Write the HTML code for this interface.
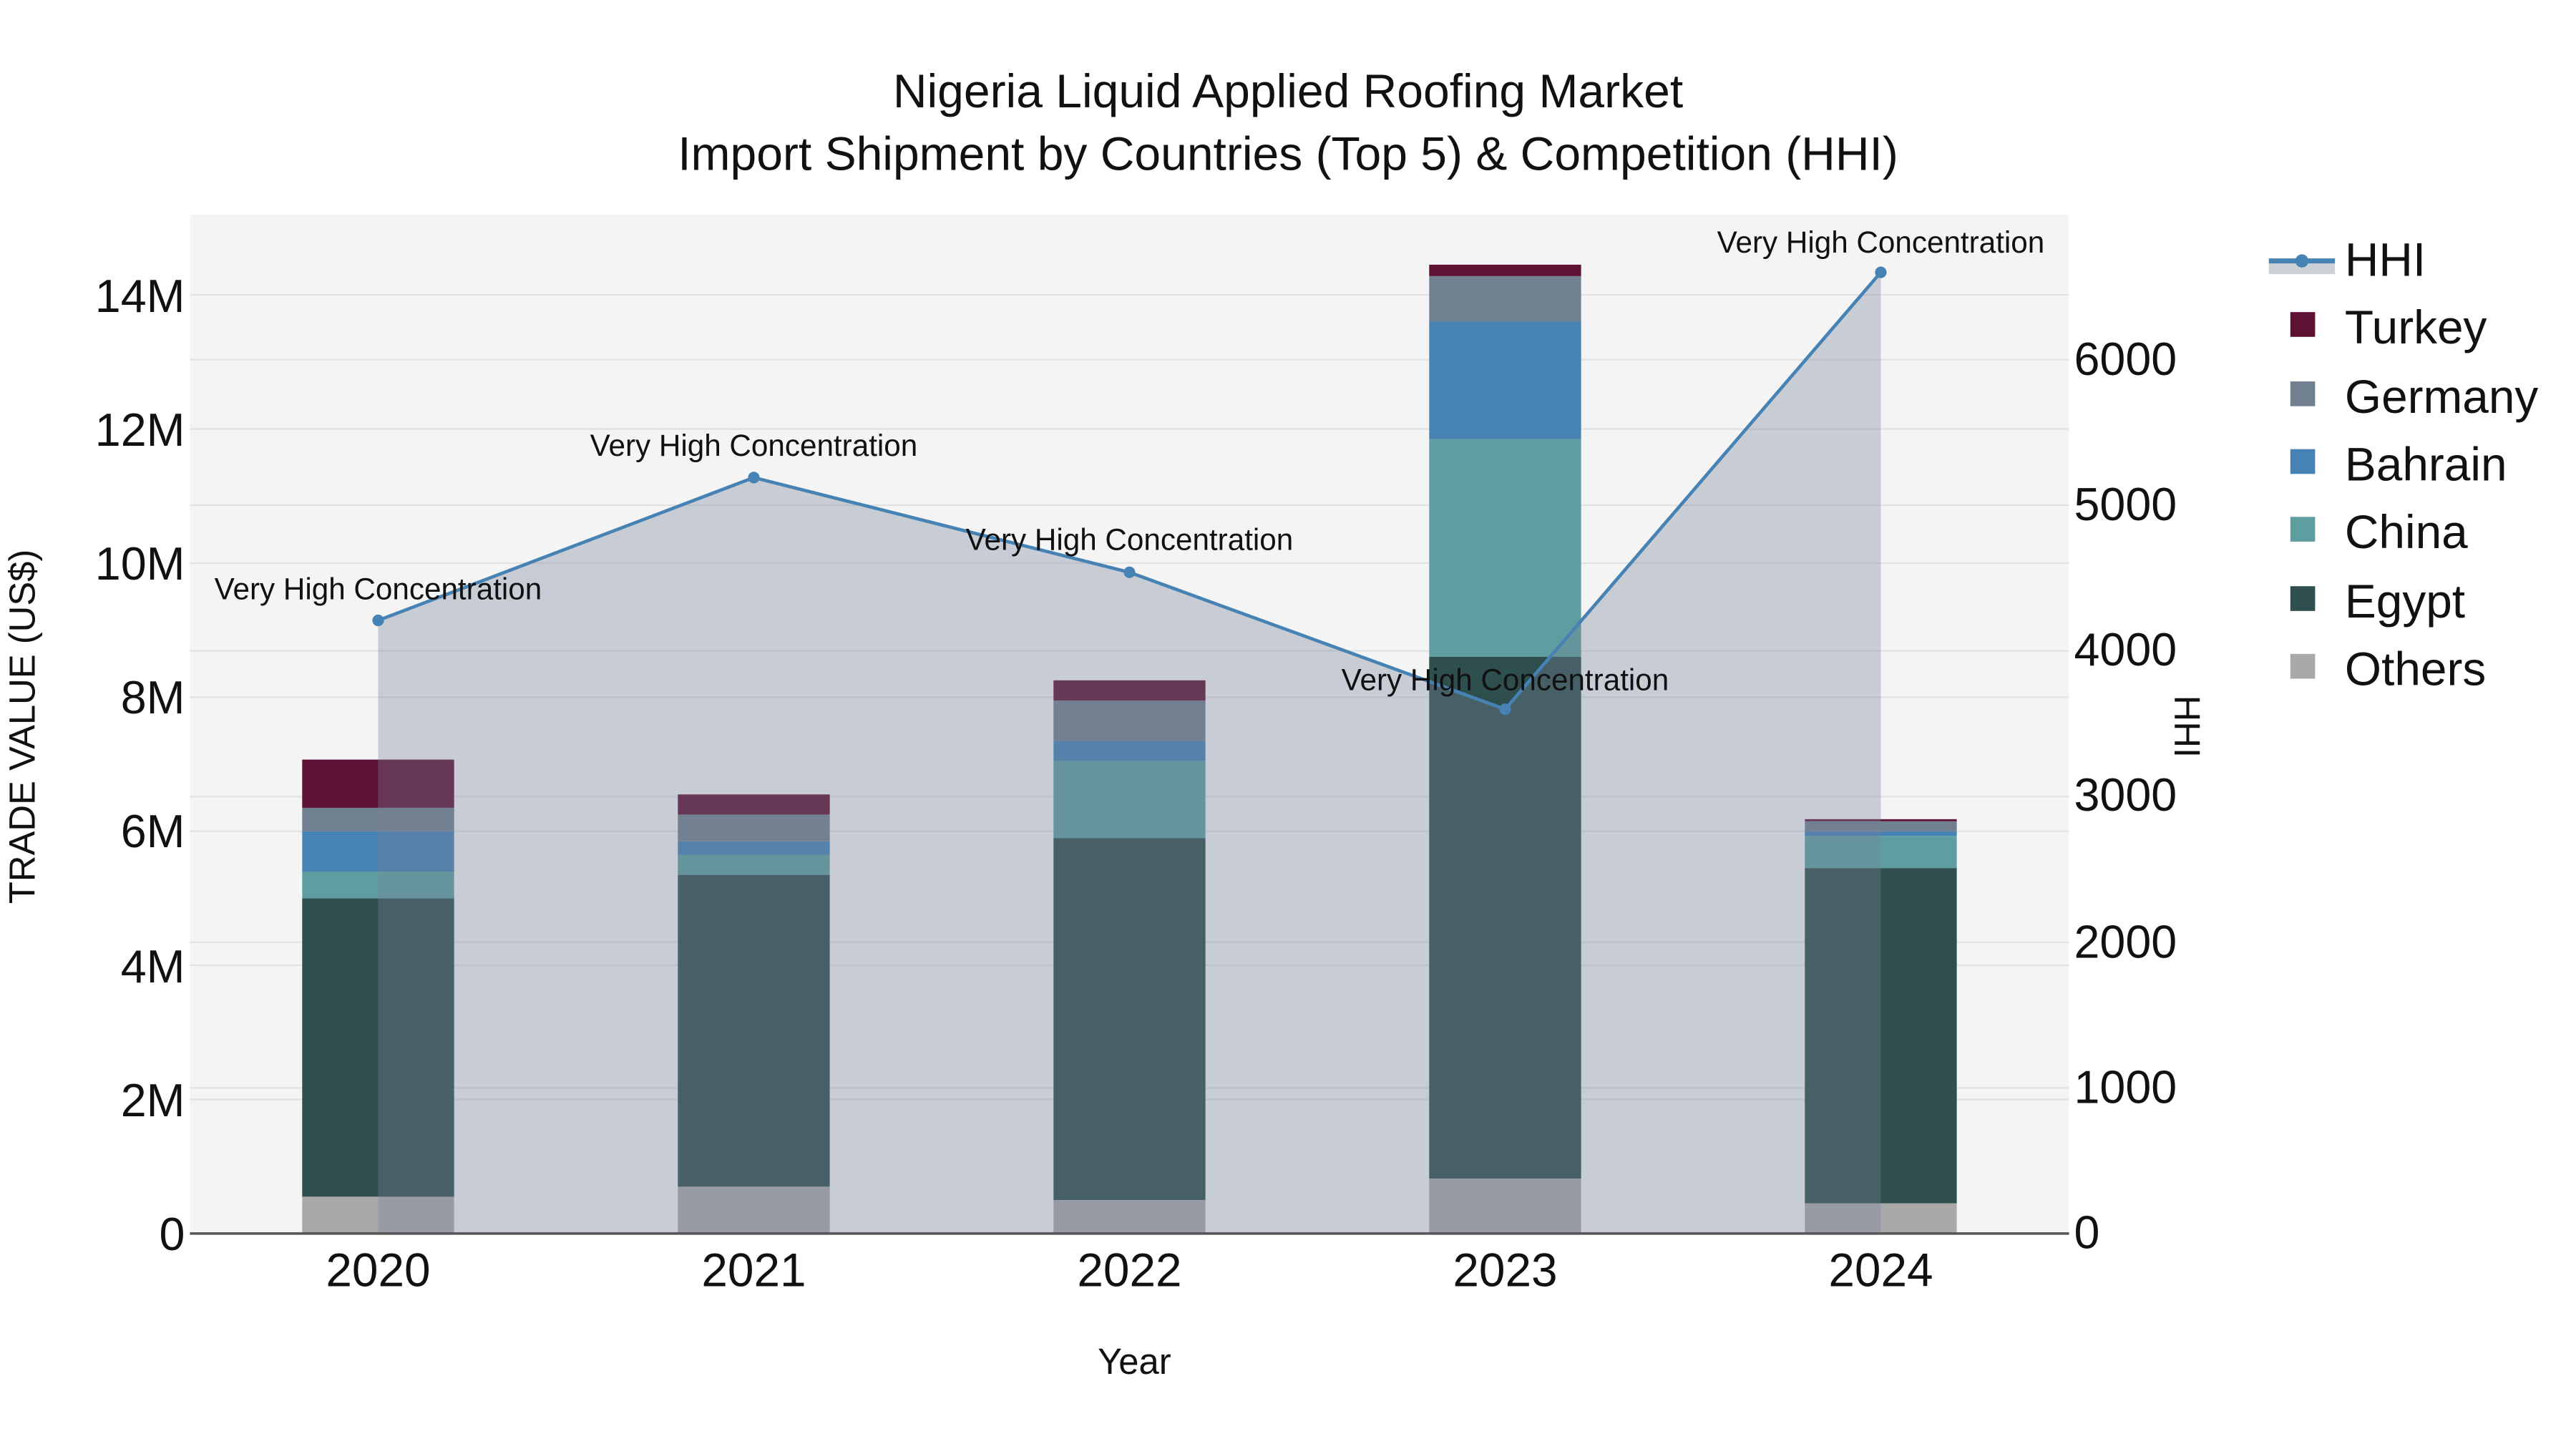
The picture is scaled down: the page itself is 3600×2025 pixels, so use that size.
<!DOCTYPE html>
<html><head><meta charset="utf-8"><style>
html,body{margin:0;padding:0;background:#fff;}
svg{display:block;}
text{font-family:"Liberation Sans",Arial,sans-serif;fill:#111;}
</style></head><body>
<svg width="3600" height="2025" viewBox="0 0 1560 877.5" xmlns="http://www.w3.org/2000/svg">
<rect x="0" y="0" width="1560" height="877.5" fill="#fff"/>
<rect x="115" y="130" width="1138" height="617" fill="#f4f4f4"/>
<g stroke="#e2e2e2" stroke-width="1">
<line x1="115" x2="1253" y1="665.8" y2="665.8"/><line x1="115" x2="1253" y1="584.6" y2="584.6"/>
<line x1="115" x2="1253" y1="503.4" y2="503.4"/><line x1="115" x2="1253" y1="422.2" y2="422.2"/>
<line x1="115" x2="1253" y1="341" y2="341"/><line x1="115" x2="1253" y1="259.8" y2="259.8"/>
<line x1="115" x2="1253" y1="178.6" y2="178.6"/>
<line x1="115" x2="1253" y1="658.8" y2="658.8"/><line x1="115" x2="1253" y1="570.6" y2="570.6"/>
<line x1="115" x2="1253" y1="482.4" y2="482.4"/><line x1="115" x2="1253" y1="394.2" y2="394.2"/>
<line x1="115" x2="1253" y1="306" y2="306"/><line x1="115" x2="1253" y1="217.8" y2="217.8"/>
</g>
<g>
<rect x="183" width="92" y="724.7" height="22.3" fill="#a9a9a9"/>
<rect x="183" width="92" y="544" height="180.7" fill="#2f4f4f"/>
<rect x="183" width="92" y="527.8" height="16.2" fill="#5f9ea0"/>
<rect x="183" width="92" y="503.4" height="24.4" fill="#4682b4"/>
<rect x="183" width="92" y="489.2" height="14.2" fill="#708090"/>
<rect x="183" width="92" y="460" height="29.2" fill="#5f1133"/>

<rect x="410.5" width="92" y="718.6" height="28.4" fill="#a9a9a9"/>
<rect x="410.5" width="92" y="529.8" height="188.8" fill="#2f4f4f"/>
<rect x="410.5" width="92" y="517.6" height="12.2" fill="#5f9ea0"/>
<rect x="410.5" width="92" y="509.5" height="8.1" fill="#4682b4"/>
<rect x="410.5" width="92" y="493.3" height="16.2" fill="#708090"/>
<rect x="410.5" width="92" y="481.1" height="12.2" fill="#5f1133"/>

<rect x="638" width="92" y="726.7" height="20.3" fill="#a9a9a9"/>
<rect x="638" width="92" y="507.5" height="219.2" fill="#2f4f4f"/>
<rect x="638" width="92" y="460.8" height="46.7" fill="#5f9ea0"/>
<rect x="638" width="92" y="448.6" height="12.2" fill="#4682b4"/>
<rect x="638" width="92" y="424.2" height="24.4" fill="#708090"/>
<rect x="638" width="92" y="412" height="12.2" fill="#5f1133"/>

<rect x="865.5" width="92" y="713.7" height="33.3" fill="#a9a9a9"/>
<rect x="865.5" width="92" y="397.8" height="315.9" fill="#2f4f4f"/>
<rect x="865.5" width="92" y="265.9" height="131.9" fill="#5f9ea0"/>
<rect x="865.5" width="92" y="194.8" height="71.1" fill="#4682b4"/>
<rect x="865.5" width="92" y="167.2" height="27.6" fill="#708090"/>
<rect x="865.5" width="92" y="160.3" height="6.9" fill="#5f1133"/>

<rect x="1093" width="92" y="728.7" height="18.3" fill="#a9a9a9"/>
<rect x="1093" width="92" y="525.7" height="203" fill="#2f4f4f"/>
<rect x="1093" width="92" y="506.2" height="19.5" fill="#5f9ea0"/>
<rect x="1093" width="92" y="503.4" height="2.8" fill="#4682b4"/>
<rect x="1093" width="92" y="497.3" height="6.1" fill="#708090"/>
<rect x="1093" width="92" y="496.1" height="1.2" fill="#5f1133"/>
</g>
<polygon points="229,747 229,375.7 456.5,289.2 684,346.6 911.5,429.5 1139,164.9 1139,747" fill="rgb(118,130,153)" fill-opacity="0.35"/>
<polyline points="229,375.7 456.5,289.2 684,346.6 911.5,429.5 1139,164.9" fill="none" stroke="#4682b4" stroke-width="2"/>
<g fill="#4682b4">
<circle cx="229" cy="375.7" r="3.5"/><circle cx="456.5" cy="289.2" r="3.5"/><circle cx="684" cy="346.6" r="3.5"/><circle cx="911.5" cy="429.5" r="3.5"/><circle cx="1139" cy="164.9" r="3.5"/>
</g>
<line x1="115" x2="1253" y1="747" y2="747" stroke="#555" stroke-width="1.5"/>
<g font-size="18.3" text-anchor="middle">
<text x="229" y="363">Very High Concentration</text>
<text x="456.5" y="276">Very High Concentration</text>
<text x="684" y="333">Very High Concentration</text>
<text x="911.5" y="418">Very High Concentration</text>
<text x="1139" y="153">Very High Concentration</text>
</g>
<g font-size="28.6" text-anchor="middle">
<text x="780" y="65">Nigeria Liquid Applied Roofing Market</text>
<text x="780" y="103">Import Shipment by Countries (Top 5) &amp; Competition (HHI)</text>
</g>
<g font-size="28" text-anchor="end">
<text x="112" y="757">0</text><text x="112" y="676">2M</text><text x="112" y="595">4M</text>
<text x="112" y="513">6M</text><text x="112" y="432">8M</text><text x="112" y="351">10M</text>
<text x="112" y="270">12M</text><text x="112" y="189">14M</text>
</g>
<g font-size="28">
<text x="1256" y="756">0</text><text x="1256" y="668">1000</text><text x="1256" y="580">2000</text>
<text x="1256" y="491">3000</text><text x="1256" y="403">4000</text><text x="1256" y="315">5000</text>
<text x="1256" y="227">6000</text>
</g>
<g font-size="28.5" text-anchor="middle">
<text x="229" y="779">2020</text><text x="456.5" y="779">2021</text><text x="684" y="779">2022</text><text x="911.5" y="779">2023</text><text x="1139" y="779">2024</text>
</g>
<text x="687" y="832" font-size="22" text-anchor="middle">Year</text>
<text transform="translate(21,440) rotate(-90)" font-size="22" text-anchor="middle">TRADE VALUE (US$)</text>
<text transform="translate(1317,440) rotate(90)" font-size="22" text-anchor="middle">HHI</text>
<rect x="1374" y="158" width="40" height="8" fill="#ccd1d8"/>
<line x1="1374" x2="1414" y1="158" y2="158" stroke="#4682b4" stroke-width="3"/>
<circle cx="1394" cy="158" r="4" fill="#4682b4"/>
<rect x="1387" y="189" width="15" height="15" fill="#5f1133"/>
<rect x="1387" y="231" width="15" height="15" fill="#708090"/>
<rect x="1387" y="272" width="15" height="15" fill="#4682b4"/>
<rect x="1387" y="313" width="15" height="15" fill="#5f9ea0"/>
<rect x="1387" y="355" width="15" height="15" fill="#2f4f4f"/>
<rect x="1387" y="396" width="15" height="15" fill="#a9a9a9"/>
<g font-size="28.5">
<text x="1420" y="167">HHI</text>
<text x="1420" y="208">Turkey</text>
<text x="1420" y="250">Germany</text>
<text x="1420" y="291">Bahrain</text>
<text x="1420" y="332">China</text>
<text x="1420" y="374">Egypt</text>
<text x="1420" y="415">Others</text>
</g>
</svg>
</body></html>
